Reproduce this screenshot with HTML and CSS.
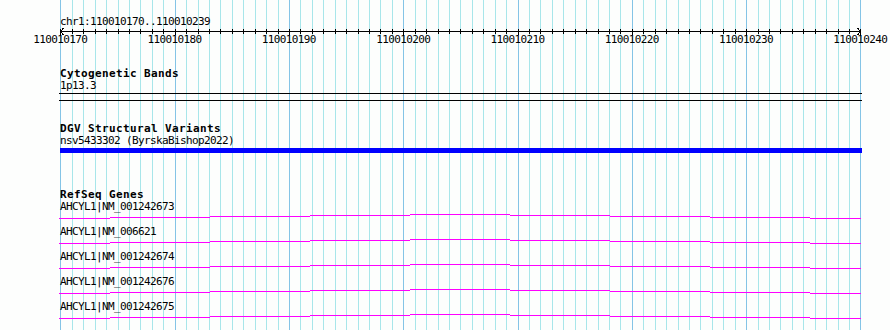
FILE: index.html
```html
<!doctype html>
<html lang="en">
  <head>
    <meta charset="UTF-8" />
    <title>chr1:110010170..110010239</title>
    <link rel="stylesheet" href="styles.css">
  </head>
  <body>
    <div class="browser">
      <svg class="grid" id="grid" width="890" height="330"></svg>

      <div class="ruler">
        <svg id="ruler" width="890" height="48">
          <text class="loc" x="60" y="25">chr1:110010170..110010239</text>
          <line class="axis" x1="60" y1="31.5" x2="861" y2="31.5" />
          <polyline class="axis" points="63.5,28 60.5,31.5 63.5,35" />
          <polyline class="axis" points="857.5,28 860.5,31.5 857.5,35" />
        </svg>
      </div>

      <section class="track bands">
        <div class="track-label">Cytogenetic Bands</div>
        <div class="feature-label">1p13.3</div>
        <svg class="feature" width="890" height="8">
          <line x1="59" y1="0.5" x2="862" y2="0.5" />
          <line x1="59" y1="7.5" x2="862" y2="7.5" />
        </svg>
      </section>

      <section class="track dgv">
        <div class="track-label">DGV Structural Variants</div>
        <div class="feature-label">nsv5433302 (ByrskaBishop2022)</div>
        <svg class="feature" width="890" height="6">
          <rect x="60" y="1" width="802" height="5" />
        </svg>
      </section>

      <section class="track refseq">
        <div class="track-label">RefSeq Genes</div>
        <svg width="0" height="0" class="defs">
          <defs>
            <g id="transcript">
              <line x1="59" y1="5.5" x2="110" y2="5.5" />
              <line x1="110" y1="4.5" x2="210" y2="4.5" />
              <line x1="210" y1="3.5" x2="310" y2="3.5" />
              <line x1="310" y1="2.5" x2="410" y2="2.5" />
              <line x1="410" y1="1.5" x2="510" y2="1.5" />
              <line x1="510" y1="2.5" x2="610" y2="2.5" />
              <line x1="610" y1="3.5" x2="710" y2="3.5" />
              <line x1="710" y1="4.5" x2="810" y2="4.5" />
              <line x1="810" y1="5.5" x2="861" y2="5.5" />
            </g>
          </defs>
        </svg>
        <div class="gene">
          <div class="feature-label">AHCYL1|NM_001242673</div>
          <svg class="feature" width="890" height="13"><use href="#transcript" /></svg>
        </div>
        <div class="gene">
          <div class="feature-label">AHCYL1|NM_006621</div>
          <svg class="feature" width="890" height="13"><use href="#transcript" /></svg>
        </div>
        <div class="gene">
          <div class="feature-label">AHCYL1|NM_001242674</div>
          <svg class="feature" width="890" height="13"><use href="#transcript" /></svg>
        </div>
        <div class="gene">
          <div class="feature-label">AHCYL1|NM_001242676</div>
          <svg class="feature" width="890" height="13"><use href="#transcript" /></svg>
        </div>
        <div class="gene">
          <div class="feature-label">AHCYL1|NM_001242675</div>
          <svg class="feature" width="890" height="13"><use href="#transcript" /></svg>
        </div>
      </section>
    </div>

    <script>
      const SVG_NS = "http://www.w3.org/2000/svg";
      const start = 110010170;
      const end = 110010240;
      const left = 60;
      const right = 860;
      const scale = (right - left) / (end - start);

      const grid = document.getElementById("grid");
      const ruler = document.getElementById("ruler");

      function addLine(parent, cls, x1, y1, x2, y2) {
        const line = document.createElementNS(SVG_NS, "line");
        line.setAttribute("class", cls);
        line.setAttribute("x1", x1);
        line.setAttribute("y1", y1);
        line.setAttribute("x2", x2);
        line.setAttribute("y2", y2);
        parent.appendChild(line);
      }

      for (let i = 0; i <= end - start; i++) {
        const major = i % 10 === 0;
        const x = Math.round(left + i * scale + 0.4) + 0.5;

        // background grid, one line per base
        addLine(grid, major ? "major" : "minor", x, 0, x, 330);

        // ruler tick
        addLine(ruler, "axis", x, 29, x, major ? 35 : 34);

        if (major) {
          const label = document.createElementNS(SVG_NS, "text");
          label.setAttribute("class", "tick-label");
          label.setAttribute("x", left + i * scale + 0.3);
          label.setAttribute("y", 43);
          label.textContent = start + i;
          ruler.appendChild(label);
        }
      }
    </script>
  </body>
</html>
```

FILE: styles.css
```css
body {
  margin: 0;
  background-color: #fdfefd;
  font-family: "DejaVu Sans Mono", monospace;
  font-size: 11px;
  letter-spacing: -0.62px;
  color: #000;
}

.browser {
  position: relative;
  width: 890px;
  height: 330px;
  overflow: hidden;
}

.grid {
  position: absolute;
  top: 0;
  left: 0;
  shape-rendering: crispEdges;
}

.grid .minor {
  stroke: #a8e6ea;
  stroke-width: 1;
}

.grid .major {
  stroke: #84c4e6;
  stroke-width: 1;
}

.ruler,
.track {
  position: relative;
}

.ruler svg,
.feature {
  display: block;
}

.ruler text {
  font-family: "DejaVu Sans Mono", monospace;
  font-size: 11px;
  letter-spacing: -0.62px;
  fill: #000;
}

.ruler .tick-label {
  text-anchor: middle;
}

.ruler .axis {
  stroke: #000;
  stroke-width: 1;
  fill: none;
  shape-rendering: crispEdges;
}

.track-label {
  font-weight: bold;
  letter-spacing: 0.38px;
  line-height: 12px;
  padding-left: 60px;
}

.feature-label {
  line-height: 12px;
  padding-left: 60px;
}

.bands {
  margin-top: 20px;
}

.bands .feature {
  margin-top: 1px;
  shape-rendering: crispEdges;
}

.bands line {
  stroke: #000;
  stroke-width: 1;
}

.dgv {
  margin-top: 22px;
}

.dgv rect {
  fill: #0000ff;
}

.refseq {
  margin-top: 36px;
}

.defs {
  position: absolute;
}

.gene .feature {
  shape-rendering: crispEdges;
  stroke: #ff00ff;
  stroke-width: 1;
}
```
